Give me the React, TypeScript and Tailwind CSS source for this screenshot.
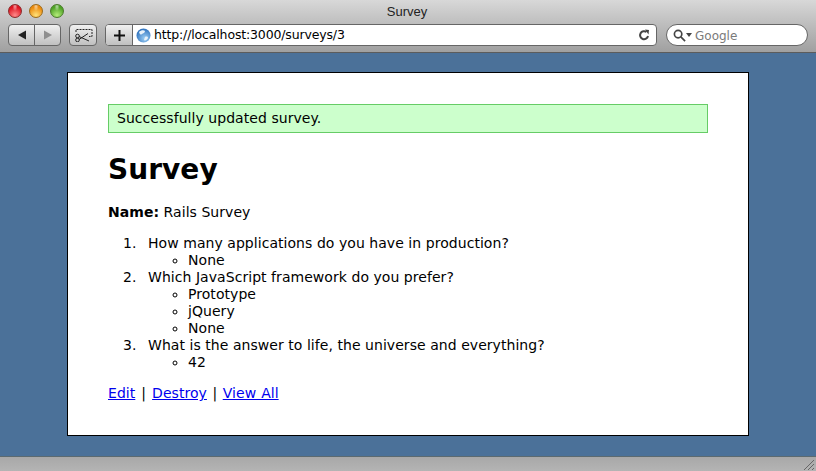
import React from 'react'

const questions = [
  { text: 'How many applications do you have in production?', marker: String.raw`list-['1.\2002__']`, answers: ['None'] },
  { text: 'Which JavaScript framework do you prefer?', marker: String.raw`list-['2.\2002__']`, answers: ['Prototype', 'jQuery', 'None'] },
  { text: 'What is the answer to life, the universe and everything?', marker: String.raw`list-['3.\2002__']`, answers: ['42'] }
]

const Toolbar = () => (
  <div className="h-[53px] shrink-0 border-b border-[#5c5c5c] bg-gradient-to-b from-[#d8d8d8] to-[#a0a0a0] font-['Liberation_Sans',sans-serif]">
    <div className="flex h-[22px] items-center">
      <div className="flex gap-[7px] pl-[8px]">
        <span className="w-[14px] h-[14px] rounded-full border border-[#8a2a2a] bg-[radial-gradient(ellipse_at_50%_12%,rgba(255,255,255,.6),transparent_30%),radial-gradient(circle_at_50%_85%,#ff8a8a,#de1420_70%)]" />
        <span className="w-[14px] h-[14px] rounded-full border border-[#9a6a1a] bg-[radial-gradient(ellipse_at_50%_12%,rgba(255,255,255,.6),transparent_30%),radial-gradient(circle_at_50%_85%,#ffe27a,#ec8a0c_70%)]" />
        <span className="w-[14px] h-[14px] rounded-full border border-[#4a7a2a] bg-[radial-gradient(ellipse_at_50%_12%,rgba(255,255,255,.6),transparent_30%),radial-gradient(circle_at_50%_85%,#b4ec7a,#4ea226_70%)]" />
      </div>
      <span className="flex-1 pt-[1px] pr-[66px] text-center text-[13px] text-[#222]">Survey</span>
    </div>

    <div className="flex items-center h-[22px] mt-[2px] pl-[8px]">
      {/* back / forward */}
      <div className="flex w-[53px] h-[22px] rounded-[4px] border border-[#666] bg-gradient-to-b from-[#f0f0f0] to-[#c0c0c0]">
        <div className="flex-1 flex items-center justify-center border-r border-[#666]">
          <svg width="10" height="10" viewBox="0 0 10 10"><path d="M1 5 9 .5v9z" fill="#222" /></svg>
        </div>
        <div className="flex-1 flex items-center justify-center">
          <svg width="10" height="10" viewBox="0 0 10 10"><path d="M9 5 1 .5v9z" fill="#8f8f8f" /></svg>
        </div>
      </div>

      {/* snip button */}
      <div className="ml-[8px] flex items-center justify-center w-[28px] h-[22px] rounded-[4px] border border-[#666] bg-gradient-to-b from-[#f0f0f0] to-[#c0c0c0]">
        <svg width="20" height="14" viewBox="0 0 20 14" fill="none" stroke="#222" strokeWidth="1">
          <path d="M3 4V1.500h16v7h-3" strokeDasharray="2 1" />
          <path d="M6 8.500 16 13M6 11.500 15 5.500" />
          <circle cx="4.500" cy="8" r="1.800" />
          <circle cx="4.500" cy="12" r="1.800" />
        </svg>
      </div>

      {/* address bar */}
      <div className="ml-[8px] flex items-center w-[552px] h-[22px] rounded-[4px] border border-[#666] bg-white overflow-hidden">
        <div className="flex items-center justify-center w-[27px] h-full border-r border-[#666] bg-gradient-to-b from-[#f0f0f0] to-[#c0c0c0]">
          <svg width="11" height="11" viewBox="0 0 11 11"><path d="M4.500 0h2v4.500h4.500v2H6.500V11h-2V6.500H0v-2h4.500z" fill="#111" /></svg>
        </div>
        <svg className="ml-[3px]" width="15" height="15" viewBox="0 0 15 15">
          <defs>
            <radialGradient id="globe" cx="0.6" cy="0.7" r="0.8">
              <stop offset="0" stopColor="#9fd0f5" />
              <stop offset="1" stopColor="#1c63b5" />
            </radialGradient>
          </defs>
          <circle cx="7.500" cy="7.500" r="7" fill="url(#globe)" />
          <path d="M3 4c2-2 5-2 6-1 0 2-2 2-3 3S4 7 3 4zM9 9c2-1 3 0 3 1-1 2-3 3-4 2z" fill="#e8f2fa" />
        </svg>
        <span className="ml-[3px] pt-[1px] flex-1 text-[12.500px] tracking-[-0.15px] text-black font-['DejaVu_Sans',sans-serif]">http://localhost:3000/surveys/3</span>
        <svg className="mr-[6px]" width="12" height="12" viewBox="0 0 12 12" fill="none">
          <path d="M10 7a4 4 0 1 1-1.500-4" stroke="#444" strokeWidth="2" />
          <path d="M7 0.500 11 1 10.500 5.500z" fill="#444" />
        </svg>
      </div>

      {/* search */}
      <div className="ml-[9px] flex items-center w-[142px] h-[22px] rounded-full border border-[#666] bg-white pl-[6px]">
        <svg width="13" height="13" viewBox="0 0 14 14" fill="none" stroke="#444" strokeWidth="1.800">
          <circle cx="5.500" cy="5.500" r="4" />
          <path d="m8.500 8.500 4.500 4.500" />
        </svg>
        <svg width="6" height="4" viewBox="0 0 6 4"><path d="M0 0h6L3 4z" fill="#444" /></svg>
        <span className="ml-[3px] pt-[1px] text-[12px] text-[#7a7a7a] font-['DejaVu_Sans',sans-serif]">Google</span>
      </div>
    </div>
  </div>
)

const StatusBar = () => (
  <div className="h-[15px] shrink-0 flex justify-end items-end border-t border-[#5c6a70] bg-gradient-to-b from-[#a8a8a8] to-[#b4b4b4]">
    <svg className="mr-[1px]" width="12" height="12" viewBox="0 0 12 12" stroke="#666" fill="none">
      <path d="M1 11 11 1M5 11l6-6M9 11l2-2" />
    </svg>
  </div>
)

export default function App() {
  return (
    <div className="flex flex-col w-[816px] h-[471px] overflow-hidden bg-[#4b7199]">
      <Toolbar />
      <div className="flex-1 pt-[19px] pl-[67px]">
        <div className="w-[682px] h-[364px] border border-black bg-white px-[40px] pt-[31px] text-[14px] leading-[17px] tracking-[0.05px] text-black font-['DejaVu_Sans','Liberation_Sans',sans-serif]">
          <div className="h-[29px] flex items-center px-[8px] border border-[#6c6] bg-[#cfc]">
            Successfully updated survey.
          </div>
          <h1 className="mt-[19px] text-[28px] leading-[36px] font-bold">Survey</h1>
          <p className="mt-[16px]">
            <strong>Name:</strong> Rails Survey
          </p>
          <ol className="mt-[14px] pl-[40px]">
            {questions.map((question) => (
              <li key={question.text} className={question.marker}>
                {question.text}
                <ul className="list-[circle] pl-[40px]">
                  {question.answers.map((answer) => (
                    <li key={answer}>{answer}</li>
                  ))}
                </ul>
              </li>
            ))}
          </ol>
          <p className="mt-[14px] [word-spacing:0.5px]">
            <a href="#" className="text-[#00e] underline">Edit</a>
            <span className="mx-[1px]">{' | '}</span>
            <a href="#" className="text-[#00e] underline">Destroy</a>
            <span className="mx-[0.5px]">{' | '}</span>
            <a href="#" className="text-[#00e] underline">View All</a>
          </p>
        </div>
      </div>
      <StatusBar />
    </div>
  )
}
